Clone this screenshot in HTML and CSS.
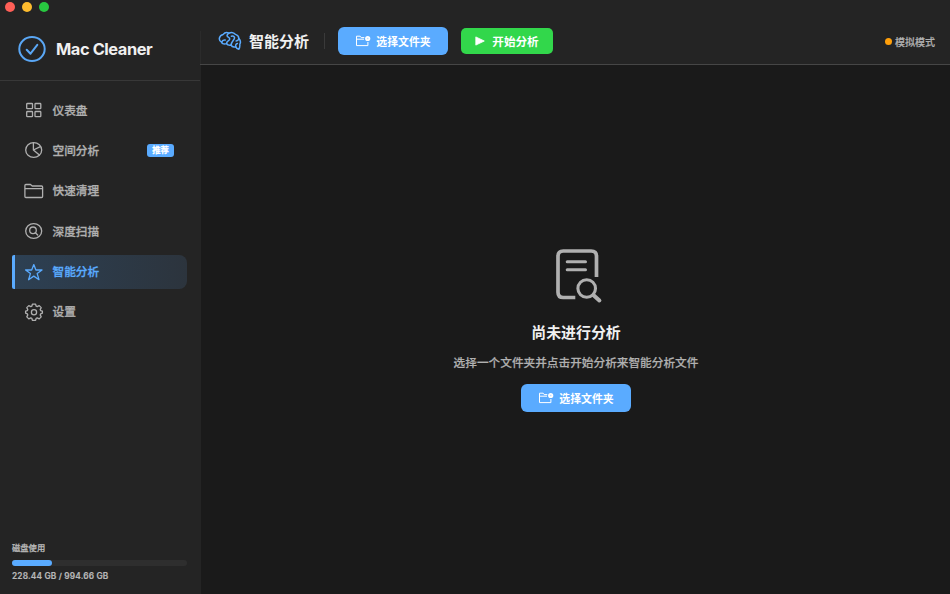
FILE: index.html
```html
<!DOCTYPE html>
<html lang="zh-CN">
<head>
<meta charset="utf-8">
<title>Mac Cleaner</title>
<link rel="stylesheet" href="styles.css">
</head>
<body>
<svg class="defs" width="0" height="0">
  <symbol id="folder-add" viewBox="0 0 16 12">
    <path d="M9.3 2.6H6.2L5.2 1.2H1.5V10.6H12.9V7M1.5 4.2H9" fill="none" stroke="currentColor" stroke-width="1" stroke-linejoin="round"/>
    <circle cx="12.7" cy="3.5" r="2.6" fill="currentColor"/>
    <path d="M12.7 2.7V4.3M11.9 3.5H13.5" stroke="#a8d2ff" stroke-width=".5"/>
  </symbol>
</svg>
<div class="app">
  <aside class="sidebar">
    <div class="lights"><i class="red"></i><i class="yellow"></i><i class="green"></i></div>
    <div class="brand">
      <svg class="logo" viewBox="0 0 28 28" fill="none" stroke="currentColor" stroke-width="2"><ellipse cx="14" cy="14" rx="12.7" ry="11.9"/><path d="M8.7 14.7l3.8 4 6.8-8.8" stroke-linecap="round" stroke-linejoin="round"/></svg>
      <h1>Mac Cleaner</h1>
    </div>
    <nav class="nav">
      <a class="item"><svg class="icon" viewBox="0 0 20 20"><rect x="2.7" y="3.5" width="5.8" height="5.2" rx=".7"/><rect x="11" y="3.5" width="5.8" height="5.2" rx=".7"/><rect x="2.7" y="11.5" width="5.8" height="5.2" rx=".7"/><rect x="11" y="11.5" width="5.8" height="5.2" rx=".7"/></svg><span>仪表盘</span></a>
      <a class="item"><svg class="icon" viewBox="0 0 20 20"><ellipse cx="9.7" cy="10" rx="8" ry="7.4"/><path d="M9.4 2.6V10L15.4 15.1M9.4 10L16.3 6.7"/></svg><span>空间分析</span><b class="badge">推荐</b></a>
      <a class="item"><svg class="icon" viewBox="0 0 20 20"><path d="M.9 4.5q0-1 1-1H6.5L8.2 5H17.6q1 0 1 1V15.5q0 1-1 1H1.9q-1 0-1-1ZM.9 7.7H18.6"/></svg><span>快速清理</span></a>
      <a class="item"><svg class="icon" viewBox="0 0 20 20"><ellipse cx="9.7" cy="10" rx="8" ry="7.4"/><circle cx="9" cy="9.3" r="3.3"/><path d="M11.4 11.8L13.7 14"/></svg><span>深度扫描</span></a>
      <a class="item active"><svg class="icon" viewBox="0 0 20 20"><path d="M9.8 2.6L11.9 8H18L13.2 11.6L15 17.7L9.8 14.1L4.6 17.7L6.4 11.6L1.6 8H7.7Z"/></svg><span>智能分析</span></a>
      <a class="item"><svg class="icon" viewBox="0 0 20 20"><path d="M8.4 2.2h3.2l.6 2 1 .4 2-1 2 2-1 2 .4 1 1.8.6v2l-1.8.7-.4 1 1 2-2 2-2-1-1 .4-.6 2H8.4l-.6-2-1-.4-2 1-2-2 1-2-.4-1-1.8-.7v-2l1.8-.6.4-1-1-2 2-2 2 1 1-.4Z"/><circle cx="10" cy="10.2" r="2.6"/></svg><span>设置</span></a>
    </nav>
    <div class="storage">
      <div class="storage-label">磁盘使用</div>
      <div class="track"><div class="fill" style="width:23%"></div></div>
      <div class="storage-value">228.44 GB / 994.66 GB</div>
    </div>
  </aside>
  <main class="main">
    <header class="toolbar">
      <svg class="brain" viewBox="0 0 24 20" fill="none" stroke="currentColor" stroke-width="1.5" stroke-linecap="round" stroke-linejoin="round"><path d="M5.2 3.4C6.4 1.8 9 1.2 11 2.2C13.2 1 16 1.5 17.4 3.4C19.6 4 20.9 5.5 20.8 7.6C22.4 9.1 22.8 11.4 21.8 13.2C22 15.3 21.7 17 20.8 18.3C19.2 17.9 18.2 17 17.8 15.7C15.8 16.3 13.8 15.7 13.1 14.1C10.9 14.4 9.3 13.9 8.6 12.6C6.4 13.4 4.2 13 3.6 11.2C1.8 10.3 1 8.7 1.5 6.8C2 4.8 3.3 3.7 5.2 3.4Z"/><path d="M3.6 11.2C4.2 9.5 5.4 8.8 7.2 9.1M11 2.2C8.2 3.8 8.7 5.6 10.6 6.4C12.5 7.3 11.7 9 10.2 9.8C9 10.5 8.5 11.4 8.6 12.6M13.4 5.3C15.6 4.6 17.2 6 16.3 7.8C15.7 9.4 13.2 11 13.1 14.1M20.8 7.6C20.5 9 19.5 9.8 18.1 9.9M17.8 15.7C17.3 14.1 18 12.9 19.4 12.6"/></svg>
      <h2>智能分析</h2>
      <span class="divider"></span>
      <button class="btn primary"><svg class="folder"><use href="#folder-add"/></svg>选择文件夹</button>
      <button class="btn start"><svg class="play" viewBox="0 0 10 10"><path d="M.8 .9L9.3 5L.8 9.1Z" fill="currentColor" stroke="currentColor" stroke-width=".8" stroke-linejoin="round"/></svg>开始分析</button>
      <div class="mode"><i></i>模拟模式</div>
    </header>
    <section class="empty">
      <svg class="doc" viewBox="0 0 50 56" fill="none" stroke="currentColor" stroke-linecap="round"><path d="M21.3 49.5H9.3Q4 49.5 4 44.2V8.3Q4 3 9.3 3H37.2Q42.5 3 42.5 8.3V29" stroke-width="3.7" stroke-linecap="butt"/><path d="M13.2 13.7H31.5M13.2 21.8H31.5" stroke-width="3"/><circle cx="32.7" cy="40.5" r="8.8" stroke-width="3.1"/><path d="M39.3 47L45.4 52.5" stroke-width="4"/></svg>
      <h3>尚未进行分析</h3>
      <p>选择一个文件夹并点击开始分析来智能分析文件</p>
      <button class="btn primary"><svg class="folder"><use href="#folder-add"/></svg>选择文件夹</button>
    </section>
  </main>
</div>
</body>
</html>
```
FILE: styles.css
```css
* { box-sizing: border-box; }
body {
  margin: 0;
  background: #1a1a1a;
  color: #f0f0f0;
  font-family: Inter, "Noto Sans CJK SC", sans-serif;
}
h1, h2, h3, p { margin: 0; }
.defs { position: absolute; }
.app { display: flex; width: 950px; height: 594px; overflow: hidden; }

.sidebar {
  width: 200px;
  flex: none;
  display: flex;
  flex-direction: column;
  background: #242424;
  box-shadow: 1px 0 #242424;
}
.lights { display: flex; gap: 7px; height: 18px; padding: 2px 0 0 5px; }
.lights i { width: 10px; height: 10px; border-radius: 50%; }
.red { background: #ff5f57; }
.yellow { background: #febc2e; }
.green { background: #28c840; }
.brand {
  display: flex;
  align-items: center;
  gap: 10px;
  height: 63px;
  padding-left: 18px;
  border-bottom: 1px solid #383838;
}
.logo { width: 28px; height: 28px; color: #5aa7f5; }
.brand h1 { font-size: 16.4px; font-weight: 700; letter-spacing: -0.42px; line-height: 20px; }

.nav { display: flex; flex-direction: column; gap: 6.4px; padding: 12px 13px 0 12px; }
.item {
  display: flex;
  align-items: center;
  height: 34px;
  padding: 0 13px 0 12px;
  border-radius: 8px;
  color: #b0b0b0;
  font-size: 11.65px;
  font-weight: 500;
  -webkit-text-stroke: 0.3px currentColor;
}
.item span { line-height: 16px; margin-top: 1px; }
.icon { width: 20px; height: 20px; margin-right: 8.5px; fill: none; stroke: currentColor; stroke-width: 1.3; stroke-linejoin: round; stroke-linecap: round; }
.badge {
  margin-left: auto;
  width: 27px;
  height: 13px;
  border-radius: 3px;
  background: #5aabff;
  color: #fff;
  font-size: 8.2px;
  line-height: 13px;
  text-align: center;
}
.item.active {
  padding-left: 9px;
  border-left: 3px solid #5aabff;
  border-radius: 2px 8px 8px 2px;
  background: linear-gradient(90deg, #2d4053, #2c343d);
  color: #5aabff;
}
.storage { margin-top: auto; padding: 0 13px 12px 12px; color: #b8b8b8; }
.storage-label { font-size: 8.3px; font-weight: 500; line-height: 12px; -webkit-text-stroke: 0.25px currentColor; }
.track { height: 6px; margin: 6px 0 4px; border-radius: 3px; background: #2e2e2e; }
.fill { height: 6px; border-radius: 3px; background: #5aabff; }
.storage-value { font-size: 8.3px; font-weight: 600; line-height: 12px; letter-spacing: 0.17px; -webkit-text-stroke: 0.2px currentColor; }

.main { flex: 1; display: flex; flex-direction: column; }
.toolbar {
  display: flex;
  align-items: center;
  height: 65px;
  padding: 18px 15px 0 18px;
  background: #242424;
  border-bottom: 1px solid #464646;
  background-image: linear-gradient(#2b2b2b, #2b2b2b);
  background-size: 1px 33px;
  background-position: 0 31px;
  background-repeat: no-repeat;
}
.brain { width: 24px; height: 20px; color: #5aabff; }
.toolbar h2 { margin: 1px 0 0 7px; font-size: 15px; line-height: 20px; font-weight: 700; }
.divider { width: 1px; height: 16px; margin: 0 13px 0 15px; background: #3a3a3a; }
.btn {
  display: flex;
  align-items: center;
  justify-content: center;
  border: 0;
  padding: 0;
  border-radius: 6px;
  color: #fff;
  font: 700 10.9px "Noto Sans CJK SC", sans-serif;
}
.primary { width: 110px; height: 28px; gap: 5px; background: #5aabff; }
.folder { width: 16px; height: 12px; }
.start { width: 92px; height: 26px; margin-left: 13px; gap: 7px; border-radius: 5px; background: #32d74b; font-size: 11.6px; }
.play { width: 10px; height: 10px; }
.mode { display: flex; align-items: center; gap: 3px; margin-left: auto; color: #b0b0b0; font-size: 10px; font-weight: 500; -webkit-text-stroke: 0.2px currentColor; }
.mode i { width: 7px; height: 7px; border-radius: 50%; background: #ff9f0a; }

.empty { flex: 1; display: flex; flex-direction: column; align-items: center; padding: 183px 0 0 2px; }
.doc { width: 50px; height: 56px; margin-left: 5px; color: #b0b0b0; }
.empty h3 { margin-top: 18px; font-size: 14.9px; line-height: 22px; font-weight: 700; }
.empty p { margin: 10px 0 12px; color: #b0b0b0; font-size: 11.67px; line-height: 18px; font-weight: 500; -webkit-text-stroke: 0.2px currentColor; }
```
